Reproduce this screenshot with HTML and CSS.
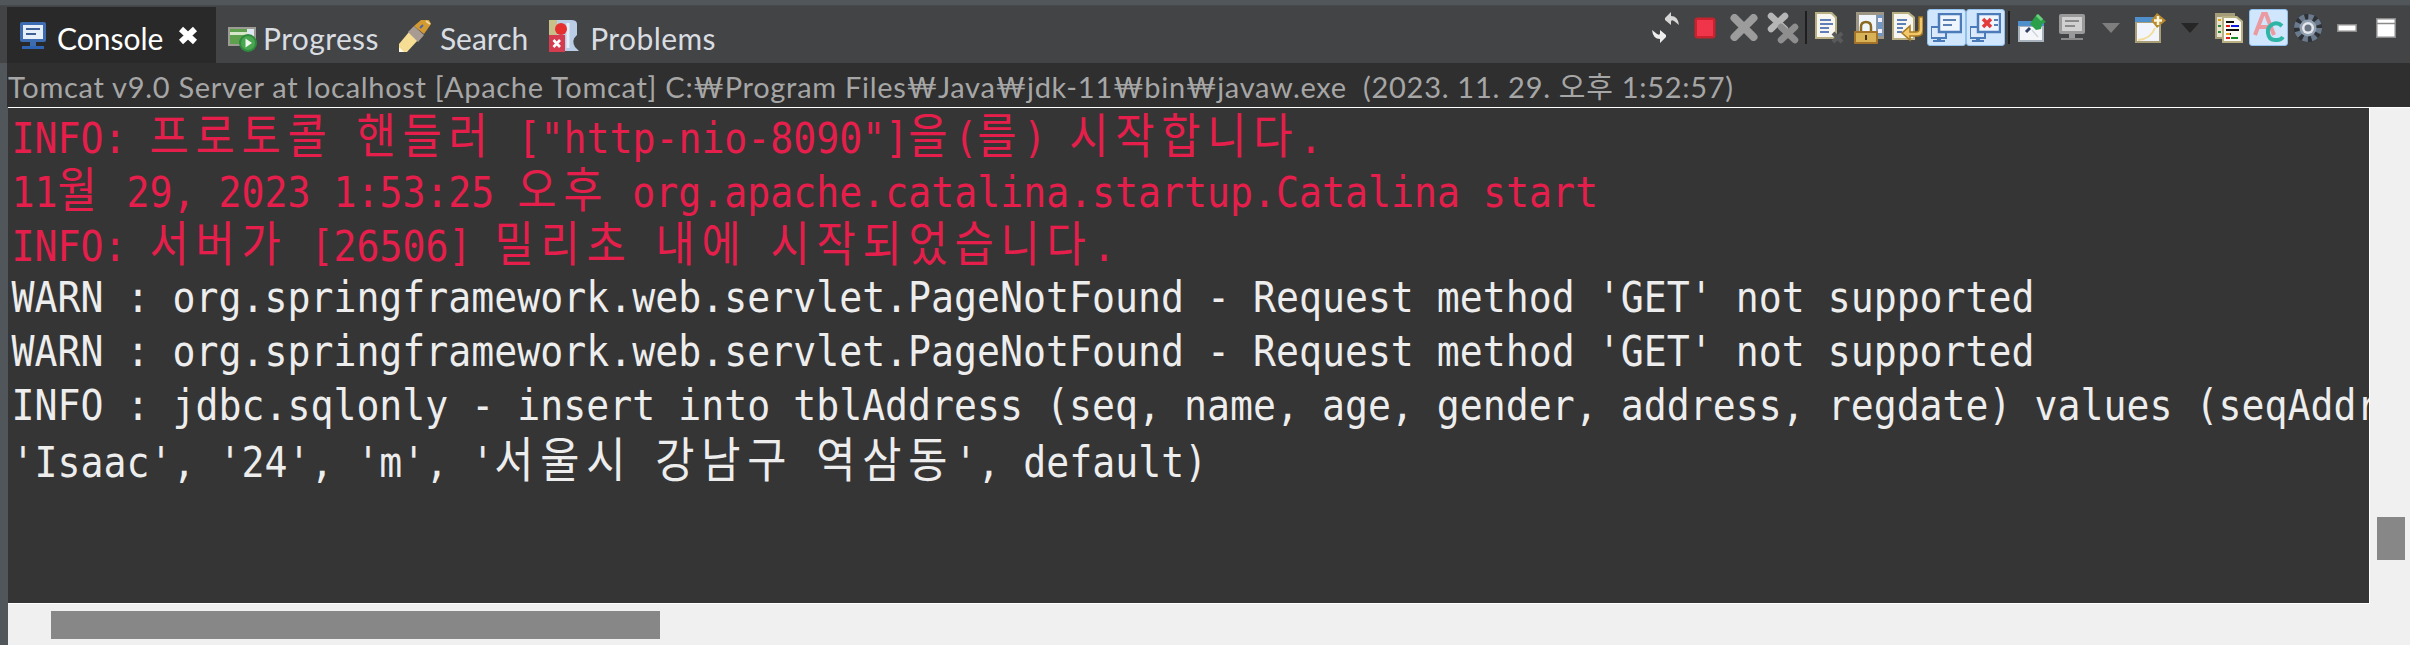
FILE: index.html
```html
<!DOCTYPE html>
<html lang="ko">
<head>
<meta charset="utf-8">
<title>Console</title>
<link rel="stylesheet" href="styles.css">
</head>
<body>
<div class="view">
  <header class="bar">
    <nav class="tabs">
      <div class="tab active">
        <svg class="ic-console" width="26" height="27" viewBox="0 0 26 27"><rect x="0" y="0" width="26" height="20" rx="2" fill="#3d6db0"/><rect x="3" y="3" width="20" height="14" fill="#e6eef9"/><rect x="6" y="6" width="14" height="2" fill="#3d5f96"/><rect x="6" y="11" width="10" height="2" fill="#3d5f96"/><rect x="10" y="20" width="6" height="4" fill="#3d6db0"/><rect x="2" y="24" width="22" height="3" fill="#2f64b5"/></svg>
        <span class="tab-label">Console</span>
        <svg class="ic-close" width="20" height="19" viewBox="0 0 20 19"><path d="M3 3L17 16M17 3L3 16" stroke="#fff" stroke-width="6" fill="none"/></svg>
      </div>
      <div class="tab">
        <svg class="ic-progress" width="29" height="25" viewBox="0 0 29 25"><rect x="0" y="0" width="28" height="19" fill="#9c9c94"/><rect x="2" y="2" width="17" height="15" fill="#5fa04e"/><rect x="2" y="5" width="17" height="3" fill="#d6e6c8"/><rect x="19" y="2" width="7" height="15" fill="#dfe7f0"/><circle cx="20" cy="16" r="9" fill="#2e8b3e"/><circle cx="20" cy="16" r="7" fill="#49a651"/><path d="M17.5 11.5L24 16L17.5 20.5Z" fill="#f0f8ee"/></svg>
        <span class="tab-label spaced">Progress</span>
      </div>
      <div class="tab">
        <svg class="ic-search" width="32" height="32" viewBox="0 0 32 32"><path d="M0 24L10 12L19 20L8 32L0 32Z" fill="#f6dd94"/><path d="M0 32L0 27L5 32Z" fill="#fffbe8"/><path d="M9 12L15 6L25 15L19 22Z" fill="#a89c92"/><path d="M15 6L22 0L30 0L32 4L25 14Z" fill="#d49a32"/><path d="M21 8L24 5" stroke="#4a64a8" stroke-width="2"/><path d="M27 1L31 4" stroke="#f2d79b" stroke-width="2"/></svg>
        <span class="tab-label">Search</span>
      </div>
      <div class="tab">
        <svg class="ic-problems" width="30" height="32" viewBox="0 0 30 32"><path d="M0 0H22Q28 0 28 4V15Q22 20 26 27L30 31H15V15H0Z" fill="#b9cde6"/><rect x="0" y="0" width="8" height="15" fill="#c9bf88"/><path d="M19 3V28" stroke="#e6eef8" stroke-width="3"/><circle cx="12" cy="9" r="6" fill="#e63030"/><rect x="0" y="15" width="16" height="17" fill="#d63c50"/><path d="M4.5 20L11 27M11 20L4.5 27" stroke="#fff" stroke-width="2.6"/></svg>
        <span class="tab-label spaced">Problems</span>
      </div>
    </nav>
    <div class="toolbar">
      <span class="tool"><svg width="29" height="31" viewBox="0 0 29 31"><path d="M14 6L20 0V4Q27 4 28 13L23 9Q20 7 20 10V13L14 8Z" fill="#d6d6d6"/><path d="M15 25L9 31V27Q2 27 1 18L6 22Q9 24 9 21V18L15 23Z" fill="#eeeeee"/></svg></span>
      <span class="tool"><svg width="22" height="22" viewBox="0 0 22 22"><rect x=".5" y=".5" width="21" height="21" rx="3" fill="#c8222f"/><rect x="3" y="3" width="16" height="16" fill="#f0344a"/></svg></span>
      <span class="tool"><svg width="28" height="27" viewBox="0 0 28 27"><path d="M4.500 4L23.500 23M23.500 4L4.500 23" stroke="#9c9c9c" stroke-width="8" stroke-linecap="round"/></svg></span>
      <span class="tool"><svg width="32" height="32" viewBox="0 0 32 32"><path d="M4 4L18 17M18 4L4 17" stroke="#b6b6b6" stroke-width="6.500" stroke-linecap="round"/><path d="M14 15L28 28M28 15L14 28" stroke="#8e8e8e" stroke-width="6.500" stroke-linecap="round"/></svg></span>
      <span class="sep"></span>
      <span class="tool"><svg width="30" height="32" viewBox="0 0 30 32"><path d="M0 0H17L22 5V27H0Z" fill="#b8af83"/><path d="M2 2H16L20 6V25H2Z" fill="#f7f6f0"/><path d="M5 8H16M5 12H18M5 16H14M5 20H14" stroke="#5f7fb8" stroke-width="2"/><path d="M18 21L27 30M27 21L18 30" stroke="#5a5a5a" stroke-width="4"/></svg></span>
      <span class="tool"><svg width="30" height="32" viewBox="0 0 30 32"><rect x="2" y="0" width="28" height="27" fill="#9d9685"/><rect x="5" y="3" width="17" height="21" fill="#eef5fd"/><rect x="23" y="3" width="6" height="21" fill="#6f96c4"/><rect x="24" y="6" width="4" height="4" fill="#eef"/><rect x="24" y="17" width="4" height="4" fill="#eef"/><path d="M7 20V15Q7 10 12 10Q17 10 17 15V20" fill="none" stroke="#8a6a22" stroke-width="2.500"/><rect x="0" y="19" width="24" height="13" rx="1" fill="#a3742a"/><rect x="2" y="21" width="20" height="9" fill="#d9b256"/><rect x="11" y="23" width="2" height="5" fill="#4a3410"/></svg></span>
      <span class="tool"><svg width="31" height="31" viewBox="0 0 31 31"><path d="M0 0H17L23 5V28H0Z" fill="#b8af83"/><path d="M2 2H16L21 6V26H2Z" fill="#f7f6f0"/><path d="M5 8H15M5 12H14M5 16H11M5 20H10" stroke="#5f7fb8" stroke-width="2"/><path d="M27 5V17Q27 20 24 20H18V14L10 21L18 28V24H25Q31 24 31 18V5Z" fill="#f2c86a" stroke="#a87a22" stroke-width="1.500"/></svg></span>
      <span class="tool on"><svg width="31" height="30" viewBox="0 0 31 30"><rect x="0" y="14" width="15" height="11" fill="#dbe9fa" stroke="#4b7bb8" stroke-width="2"/><rect x="6" y="25" width="4" height="2" fill="#4b7bb8"/><rect x="2" y="27" width="12" height="2" fill="#4b7bb8"/><rect x="8" y="1" width="22" height="18" fill="#eef5fd" stroke="#4b7bb8" stroke-width="2.500"/><path d="M12 7H25M12 12H21" stroke="#5b7fb0" stroke-width="2"/></svg></span>
      <span class="tool on"><svg width="31" height="30" viewBox="0 0 31 30"><rect x="0" y="14" width="15" height="11" fill="#dbe9fa" stroke="#4b7bb8" stroke-width="2"/><rect x="6" y="25" width="4" height="2" fill="#4b7bb8"/><rect x="2" y="27" width="12" height="2" fill="#4b7bb8"/><rect x="8" y="1" width="22" height="18" fill="#eef5fd" stroke="#4b7bb8" stroke-width="2.500"/><path d="M13 6L21 14M21 6L13 14" stroke="#e43a3a" stroke-width="3.500"/><path d="M24 7H28M24 12H28" stroke="#5b7fb0" stroke-width="2"/></svg></span>
      <span class="sep"></span>
      <span class="tool"><svg width="29" height="29" viewBox="0 0 29 29"><rect x="0" y="8" width="26" height="21" fill="#a8b2bc"/><rect x="2" y="14" width="22" height="13" fill="#f4f6fa"/><rect x="0" y="8" width="26" height="5" fill="#4f90cc"/><path d="M19 1L28 9L24 11L23 16L18 17L12 11L14 8Z" fill="#2aa04a"/><path d="M19 2L24 7" stroke="#6ccf7c" stroke-width="3"/><path d="M12 15L8 19" stroke="#2f3f66" stroke-width="3"/><path d="M14 17L20 24" stroke="#cfd6df" stroke-width="1.500"/></svg></span>
      <span class="tool"><svg width="26" height="27" viewBox="0 0 26 27"><rect x="0" y="0" width="26" height="20" rx="2" fill="#9a9a9a"/><rect x="3" y="3" width="20" height="14" fill="#d0d0d0"/><rect x="6" y="6" width="14" height="2" fill="#8a8a8a"/><rect x="6" y="11" width="10" height="2" fill="#8a8a8a"/><rect x="10" y="20" width="6" height="4" fill="#9a9a9a"/><rect x="2" y="24" width="22" height="2" fill="#8a8a8a"/></svg></span>
      <span class="tool"><svg width="18" height="10" viewBox="0 0 18 10"><path d="M0 0H18L9 10Z" fill="#7e7e7e"/></svg></span>
      <span class="tool wide"><svg width="31" height="30" viewBox="0 0 31 30"><rect x="0" y="4" width="26" height="26" fill="#a89f78"/><rect x="2" y="10" width="22" height="18" fill="#f2f5fb"/><rect x="0" y="4" width="26" height="5" fill="#4f90cc"/><path d="M22 0L31 7.500L22 15L16 7.500Z" fill="#b98a2e"/><path d="M23 3V12M19 7.500H27" stroke="#fdf6dc" stroke-width="2.500"/><path d="M3 27Q16 26 20 15" stroke="#f3dd9a" stroke-width="2" fill="none"/></svg></span>
      <span class="tool"><svg width="18" height="10" viewBox="0 0 18 10"><path d="M0 0H18L9 10Z" fill="#262626"/></svg></span>
      <span class="tool wide"><svg width="28" height="30" viewBox="0 0 28 30"><rect x="0" y="0" width="20" height="26" fill="#a59c7a"/><rect x="2" y="4" width="6" height="20" fill="#e8e4cf"/><rect x="3" y="6" width="3" height="2" fill="#e0a020"/><rect x="3" y="12" width="3" height="2" fill="#2a8a3a"/><rect x="3" y="18" width="3" height="2" fill="#2a8a3a"/><path d="M7 3H22L28 8V30H7Z" fill="#b8af83"/><path d="M9 5H21L26 9V28H9Z" fill="#fbfbf6"/><path d="M11 9H19M11 13H15" stroke="#111" stroke-width="2"/><path d="M16 13H24" stroke="#0a1ae0" stroke-width="2"/><path d="M11 13H15" stroke="#e01a1a" stroke-width="2"/><path d="M11 17H24M11 21H16" stroke="#111" stroke-width="2"/><path d="M11 21H15" stroke="#e8a020" stroke-width="2"/><path d="M11 25H15" stroke="#e01a1a" stroke-width="2"/><path d="M16 25H23" stroke="#138a2a" stroke-width="2"/></svg></span>
      <span class="tool on"><svg width="32" height="32" viewBox="0 0 32 32"><path d="M2 23L10 2H13L21 23M5.500 15H18" fill="none" stroke="#ea9aa0" stroke-width="4"/><path d="M29 14Q25 10 20 12Q14 15 15 21Q16 29 24 28Q28 28 30 25" fill="none" stroke="#2fb5a5" stroke-width="4"/></svg></span>
      <span class="tool"><svg width="32" height="32" viewBox="0 0 32 32"><circle cx="16" cy="16" r="11" fill="none" stroke="#2e3136" stroke-width="6"/><circle cx="16" cy="16" r="11" fill="none" stroke="#6a7a8c" stroke-width="6" stroke-dasharray="5 3.640"/><circle cx="16" cy="16" r="8.500" fill="#8f9fb0"/><circle cx="16" cy="16" r="6" fill="#e4e8ee"/><circle cx="16" cy="16" r="3.500" fill="#6a7480"/></svg></span>
      <span class="tool"><svg width="20" height="8" viewBox="0 0 20 8"><rect x=".75" y=".75" width="18.500" height="6.500" fill="#fff" stroke="#8a8a8a" stroke-width="1.500"/></svg></span>
      <span class="tool"><svg width="20" height="20" viewBox="0 0 20 20"><rect x=".75" y=".75" width="18.500" height="18.500" fill="#fff" stroke="#8a8a8a" stroke-width="1.500"/><path d="M1 5.500H19" stroke="#8a8a8a" stroke-width="1.500"/></svg></span>
    </div>
  </header>
  <div class="subtitle">Tomcat v9.0 Server at localhost [Apache Tomcat] C:₩Program Files₩Java₩jdk-11₩bin₩javaw.exe&nbsp; (2023. 11. 29. 오후 1:52:57)</div>
  <main class="content">
    <div class="console-row">
      <div class="console">
        <div class="log">
          <div class="line err">INFO: <span class="ko">프로토콜</span> <span class="ko">핸들러</span> ["http-nio-8090"]<span class="ko">을</span>(<span class="ko">를</span>) <span class="ko">시작합니다</span>.</div>
          <div class="line err">11<span class="ko">월</span> 29, 2023 1:53:25 <span class="ko">오후</span> org.apache.catalina.startup.Catalina start</div>
          <div class="line err">INFO: <span class="ko">서버가</span> [26506] <span class="ko">밀리초</span> <span class="ko">내에</span> <span class="ko">시작되었습니다</span>.</div>
          <div class="line">WARN : org.springframework.web.servlet.PageNotFound - Request method 'GET' not supported</div>
          <div class="line">WARN : org.springframework.web.servlet.PageNotFound - Request method 'GET' not supported</div>
          <div class="line">INFO : jdbc.sqlonly - insert into tblAddress (seq, name, age, gender, address, regdate) values (seqAddress.nextVal,</div>
          <div class="line">'Isaac', '24', 'm', '<span class="ko">서울시</span> <span class="ko">강남구</span> <span class="ko">역삼동</span>', default)</div>
        </div>
      </div>
      <div class="vscroll"><div class="vthumb"></div></div>
    </div>
    <div class="hscroll"><div class="hthumb"></div></div>
  </main>
</div>
</body>
</html>
```
FILE: styles.css
```css
html, body { margin: 0; padding: 0; }
body { width: 2410px; height: 645px; overflow: hidden; background: #4d5457; }
.view { display: flex; flex-direction: column; width: 2410px; height: 645px; padding-top: 5px; box-sizing: border-box; background: #50565a; }
.bar { display: flex; justify-content: space-between; height: 58px; padding-left: 7px; background: #434446; border-top: 1px solid #48494c; box-sizing: border-box; }
.tabs { display: flex; align-items: flex-end; }
.tab { display: flex; align-items: center; height: 56px; color: #d9dde2; font: 30px/36px "Lato", "Noto Sans", sans-serif; }
.tab.active { width: 209px; background: #292929; color: #fff; box-sizing: border-box; padding-left: 13px; }
.tab-label { display: block; margin-top: 6px; }
.tab-label.spaced { letter-spacing: 0.4px; }
.ic-console { margin-right: 11px; }
.ic-close { margin-left: 15px; }
.ic-progress { margin-left: 12px; margin-right: 6px; margin-top: 8px; }
.ic-search { margin-left: 20px; margin-right: 9px; margin-top: 2px; }
.ic-problems { margin-left: 21px; margin-right: 11px; margin-top: 2px; }
.toolbar { display: flex; align-items: flex-start; padding-right: 5px; padding-top: 3px; }
.tool { display: flex; align-items: center; justify-content: center; width: 39px; height: 37px; box-sizing: border-box; }
.tool.wide { width: 40px; }
.tool.on { background: #cfe6fc; border: 1px solid #8fc0ee; border-radius: 3px; }
.sep { display: block; width: 8px; height: 33px; margin-top: 2px; background: linear-gradient(#1f1f1f, #1f1f1f) center / 2px 100% no-repeat; }
.subtitle { height: 44px; margin-left: 7px; padding: 4px 0 0 1px; box-sizing: border-box; background: #2f2f2f; color: #a6a6a6; font: 29px/40px "Lato", "Noto Sans CJK KR", sans-serif; letter-spacing: 0.71px; white-space: pre; overflow: hidden; }
.content { display: flex; flex-direction: column; flex: 1; min-height: 0; margin-left: 8px; background: #f0f0f0; border-top: 1px solid #fff; }
.console-row { display: flex; height: 496px; }
.console { width: 2361px; height: 495px; background: #353535; overflow: hidden; border-right: 1px solid #fff; border-bottom: 1px solid #fff; box-sizing: content-box; }
.log { width: max-content; padding: 0 0 0 4px; transform: scaleX(0.888); transform-origin: left top; font: 43px/54px "DejaVu Sans Mono", "Liberation Mono", monospace; color: #ededed; }
.line { height: 54px; white-space: pre; }
.line.err { color: #e61e4b; }
.ko { display: inline-block; font-family: "Noto Sans CJK KR", sans-serif; font-size: 48px; letter-spacing: 7.64px; line-height: 48px; }
.vscroll { flex: 1; padding: 409px 0 0 7px; box-sizing: border-box; }
.vthumb { width: 28px; height: 43px; background: #878787; }
.hscroll { height: 40px; padding: 7px 0 0 43px; box-sizing: border-box; }
.hthumb { width: 609px; height: 28px; background: #878787; }
```
